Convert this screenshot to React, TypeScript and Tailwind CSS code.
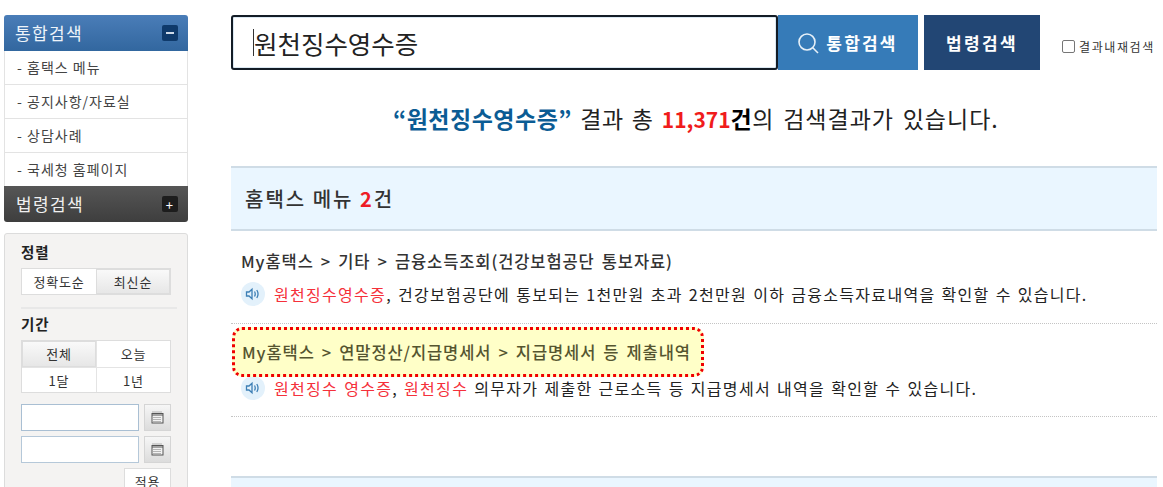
import React from "react";

const font = { fontFamily: '"Noto Sans CJK KR", "Liberation Sans", sans-serif' };

function Speaker() {
  return (
    <span className="flex h-[24px] w-[24px] shrink-0 items-center justify-center rounded-full bg-[#e3f1fb]">
      <svg width="16" height="14" viewBox="0 0 16 14" fill="none" stroke="#3d7fb5" strokeWidth="1.3">
        <path d="M1.5 5h2.5l3-2.8v9.6L4 9H1.5z" />
        <path d="M9.5 4.5c.9 1.5.9 3.5 0 5" />
        <path d="M11.8 3c1.5 2.4 1.5 5.6 0 8" />
      </svg>
    </span>
  );
}

function Calendar() {
  return (
    <span className="flex h-[27px] w-[27px] shrink-0 items-center justify-center border border-[#d5d5d5] bg-gradient-to-b from-[#f6f6f6] to-[#dcdcdc]">
      <svg width="13" height="13" viewBox="0 0 13 13" fill="none">
        <path d="M2 .5v1M4 .5v1M6 .5v1M8 .5v1M10 .5v1" stroke="#777" />
        <rect x="1" y="2.5" width="11" height="9.5" fill="#f2f2f2" stroke="#555" />
        <path d="M1 4h11" stroke="#555" />
        <path d="M2.5 6.5h8M2.5 8.5h8M2.5 10.5h8" stroke="#777" strokeDasharray="1 1" />
      </svg>
    </span>
  );
}

function MenuItem({ label, last }: { label: string; last?: boolean }) {
  return (
    <div
      className={
        last
          ? "flex h-[33px] items-center border-x border-[#e3e3e3] bg-white pl-[12px] text-[14px] tracking-[1px] text-[#444]"
          : "flex h-[34px] items-center border-x border-b border-[#e3e3e3] bg-white pl-[12px] text-[14px] tracking-[1px] text-[#444]"
      }
    >
      - {label}
    </div>
  );
}

function Sidebar() {
  const on = "bg-gradient-to-b from-[#fafafa] to-[#e6e6e6] shadow-[inset_0_0_0_1px_#ddd]";
  return (
    <aside className="w-[184px] shrink-0">
      <div className="flex h-[36px] items-center justify-between rounded-t-[3px] bg-gradient-to-b from-[#4a7db8] to-[#32679f] pl-[11px] pr-[10px] text-[17px] tracking-[1.4px] text-[#eef4fa]">
        통합검색
        <span className="flex h-[16px] w-[16px] items-center justify-center rounded-[2px] bg-[#0f3a6b]">
          <span className="h-[2px] w-[8px] bg-[#cfdbe8]" />
        </span>
      </div>
      <MenuItem label="홈택스 메뉴" />
      <MenuItem label="공지사항/자료실" />
      <MenuItem label="상담사례" />
      <MenuItem label="국세청 홈페이지" last />
      <div className="flex h-[36px] items-center justify-between rounded-b-[3px] bg-gradient-to-b from-[#565656] to-[#3e3e3e] pl-[12px] pr-[10px] text-[17px] tracking-[1.4px] text-[#f0f0f0]">
        법령검색
        <span className="flex h-[16px] w-[16px] items-center justify-center rounded-[2px] bg-[#1d1d1d] text-[13px] leading-none text-white">+</span>
      </div>

      <div className="mt-[11px] rounded-[3px] border border-[#dcdcdc] bg-[#f4f3f2] px-[16px] pt-[9px] pb-[20px]">
        <div className="text-[14.5px] font-bold leading-[18px] tracking-[1px] text-[#222]">정렬</div>
        <div className="mt-[7px] grid h-[27px] w-[150px] grid-cols-2 border border-[#ddd] bg-white text-center text-[13px] leading-[25px] tracking-[.8px] text-[#333]">
          <div>정확도순</div>
          <div className={on}>최신순</div>
        </div>
        <div className="mt-[12px] h-[2px] w-[156px] bg-[#e8e8e8]" />
        <div className="mt-[6px] text-[14.5px] font-bold leading-[18px] tracking-[1px] text-[#222]">기간</div>
        <div className="mt-[7px] grid h-[53px] w-[150px] grid-cols-2 grid-rows-2 border border-[#ddd] bg-white text-center text-[13px] leading-[25px] tracking-[.8px] text-[#333]">
          <div className={on}>전체</div>
          <div className="border-l border-[#e4e4e4]">오늘</div>
          <div className="border-t border-[#e4e4e4]">1달</div>
          <div className="border-l border-t border-[#e4e4e4]">1년</div>
        </div>
        <div className="mt-[11px] flex w-[150px] items-center justify-between">
          <div className="h-[27px] w-[118px] border border-[#a9bfd3] bg-white" />
          <Calendar />
        </div>
        <div className="mt-[5px] flex w-[150px] items-center justify-between">
          <div className="h-[27px] w-[118px] border border-[#b5c8d9] bg-white" />
          <Calendar />
        </div>
        <div className="mt-[5px] flex w-[150px] justify-end">
          <div className="h-[27px] w-[47px] border border-[#ddd] bg-white text-center text-[13px] leading-[25px] tracking-[.8px] text-[#333]">적용</div>
        </div>
      </div>
    </aside>
  );
}

function SearchBar() {
  return (
    <div className="flex h-[55px] items-stretch">
      <div className="flex w-[547px] items-center rounded-[3px] border-2 border-[#131c26] bg-white pl-[20px] shadow-[inset_0_0_0_1px_#dbe8f2]">
        <span className="h-[27px] w-px bg-[#333]" />
        <span className="text-[25.5px] leading-none text-[#222]">원천징수영수증</span>
      </div>
      <div className="flex w-[140px] items-center justify-center gap-[7px] bg-[#367bb8] pr-[1px] text-[17px] font-bold tracking-[2.2px] text-white">
        <svg width="22" height="22" viewBox="0 0 22 22" fill="none" stroke="#e6f0f8" strokeWidth="1.6">
          <circle cx="10" cy="10" r="8" />
          <path d="M15.8 15.8L21 21" />
        </svg>
        통합검색
      </div>
      <div className="ml-[6px] flex w-[116px] items-center justify-center bg-[#224674] text-[17px] font-bold tracking-[2.4px] text-white">법령검색</div>
      <label className="ml-[22px] flex items-center gap-[4px] pt-[8px] text-[12px] tracking-[1.6px] whitespace-nowrap text-[#333]">
        <span className="h-[13px] w-[13px] rounded-[2px] border border-[#767676] bg-white" />
        결과내재검색
      </label>
    </div>
  );
}

function Result({ title, second, body }: { title: string; second?: boolean; body: React.ReactNode }) {
  return (
    <div className={second ? "border-b border-dotted border-[#c4c4c4] pt-[16px] pb-[12px]" : "border-b border-dotted border-[#c4c4c4] pt-[15px] pb-[13px]"}>
      <div className="flex h-[30px] items-center pl-[10px] text-[16.5px] font-medium tracking-[.9px] [word-spacing:2.5px] text-[#333]">{title}</div>
      <div className="mt-[2px] flex h-[32px] items-center gap-[9px] pl-[10px] text-[16px] tracking-[1.3px] [word-spacing:1.2px] text-[#222]">
        <Speaker />
        <span>{body}</span>
      </div>
    </div>
  );
}

export default function App() {
  return (
    <div className="flex h-[487px] w-[1163px] overflow-hidden bg-white pt-[15px] pl-[4px]" style={font}>
      <Sidebar />
      <main className="ml-[43px] w-[926px]">
        <SearchBar />
        <div className="mt-[30px] h-[36px] pl-[162px] text-[23px] leading-[36px] tracking-[.5px] [word-spacing:2.6px] text-[#222]">
          <span className="font-bold text-[#0b5c94]">“원천징수영수증”</span> 결과 총{" "}
          <span className="text-[21px] leading-none font-bold tracking-[0px] text-[#f01c1c]">11,371</span>
          <span className="font-bold text-black">건</span>
          <span className="tracking-[1px]">의 검색결과가 있습니다.</span>
        </div>
        <div className="mt-[30px] flex h-[65px] items-center border-y-2 border-[#cfdce6] bg-[#eaf6ff] pl-[14px] text-[20px] font-medium tracking-[2px] text-[#333]">
          홈택스 메뉴&nbsp;<span className="font-bold text-[#ee1c25]">2</span>건
        </div>
        <Result
          title="My홈택스 > 기타 > 금융소득조회(건강보험공단 통보자료)"
          body={
            <>
              <span className="text-[#f5303a]">원천징수영수증</span>, 건강보험공단에 통보되는 1천만원 초과 2천만원 이하 금융소득자료내역을 확인할 수 있습니다.
            </>
          }
        />
        <div className="relative">
          <div className="absolute left-[1px] top-[3px] z-10 flex h-[50px] w-[472px] items-center rounded-[10px] border-[3px] border-dotted border-[#f00000] bg-[#ffffc8] pl-[7px] text-[16.5px] font-medium tracking-[.9px] [word-spacing:2.5px] text-[#555530]">
            My홈택스 &gt; 연말정산/지급명세서 &gt; 지급명세서 등 제출내역
          </div>
          <Result
            title=""
            second
            body={
              <>
                <span className="text-[#f5303a]">원천징수 영수증</span>, <span className="text-[#f5303a]">원천징수</span> 의무자가 제출한 근로소득 등 지급명세서 내역을 확인할 수 있습니다.
              </>
            }
          />
        </div>
        <div className="mt-[59px] h-[20px] border-t-2 border-[#cfdce6] bg-[#eaf6ff]" />
      </main>
    </div>
  );
}
